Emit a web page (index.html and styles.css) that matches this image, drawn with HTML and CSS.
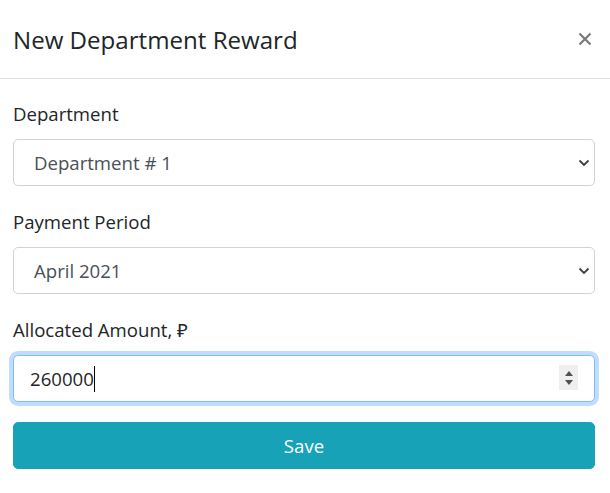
FILE: index.html
```html
<!DOCTYPE html>
<html lang="en">
<head>
<meta charset="utf-8">
<title>New Department Reward</title>
<link rel="stylesheet" href="styles.css">
</head>
<body>
<div class="modal">
  <div class="modal-header">
    <h5 class="modal-title">New Department Reward</h5>
    <button type="button" class="close" aria-label="Close"><svg width="14" height="14" viewBox="0 0 14 14"><path d="M1.5 1.5 L12.5 12.5 M12.5 1.5 L1.5 12.5" stroke="#7a7a7a" stroke-width="2.2" fill="none"/></svg></button>
  </div>
  <form class="modal-body">
    <div class="form-group">
      <label class="label">Department</label>
      <div class="select-wrap">
        <select class="form-control select">
          <option>Department # 1</option>
        </select>
        <svg class="chevron" width="12" height="8" viewBox="0 0 12 8"><path d="M1.5 1.5 L6 6 L10.5 1.5" fill="none" stroke="#3b3f44" stroke-width="1.8"/></svg>
      </div>
    </div>
    <div class="form-group">
      <label class="label">Payment Period</label>
      <div class="select-wrap">
        <select class="form-control select">
          <option>April 2021</option>
        </select>
        <svg class="chevron" width="12" height="8" viewBox="0 0 12 8"><path d="M1.5 1.5 L6 6 L10.5 1.5" fill="none" stroke="#3b3f44" stroke-width="1.8"/></svg>
      </div>
    </div>
    <div class="form-group last">
      <label class="label">Allocated Amount, ₽</label>
      <div class="form-control input focus">
        <span class="value">260000</span><span class="caret"></span>
        <span class="spinner">
          <svg width="10" height="18" viewBox="0 0 10 18"><path d="M1 7 L5 2 L9 7 Z M1 11 L5 16 L9 11 Z" fill="#505050"/></svg>
        </span>
      </div>
    </div>
    <button type="button" class="btn">Save</button>
  </form>
</div>
</body>
</html>
```
FILE: styles.css
```css
html, body {
  margin: 0;
  padding: 0;
  background: #fff;
}
body {
  font-family: "Open Sans", "Noto Sans", sans-serif;
  font-size: 18.6px;
  line-height: 30px;
  color: #212529;
}
.modal {
  width: 610px;
}
.modal-header {
  display: flex;
  align-items: center;
  justify-content: space-between;
  padding: 1px 18px 0 13px;
  border-bottom: 1px solid #dee2e6;
  box-sizing: border-box;
  height: 79px;
}
.modal-title {
  margin: 0;
  font-size: 24.1px;
  font-weight: 400;
  line-height: 37px;
}
.close {
  display: flex;
  border: 0;
  background: transparent;
  padding: 0;
  margin-top: -2px;
  line-height: 0;
}
.modal-body {
  display: block;
  padding: 20px 15px 20px 13px;
}
.form-group {
  margin-bottom: 21px;
}
.form-group.last {
  margin-bottom: 20px;
}
.label {
  display: block;
  margin-bottom: 10px;
  line-height: 30px;
}
.form-control {
  display: block;
  width: 100%;
  height: 47px;
  box-sizing: border-box;
  border: 1px solid #ced4da;
  border-radius: 5px;
  background: #fff;
  font-family: inherit;
  font-size: 18.6px;
  line-height: 30px;
  color: #495057;
}
.select-wrap {
  position: relative;
}
.select {
  appearance: none;
  -webkit-appearance: none;
  padding: 7px 15px 7px 20px;
}
.chevron {
  position: absolute;
  right: 5px;
  top: 20px;
}
.input {
  position: relative;
  display: flex;
  align-items: center;
  padding: 0 15px 0 16px;
  color: #212529;
}
.focus {
  border-color: #80bdff;
  box-shadow: 0 0 0 4px rgba(0, 123, 255, .25);
}
.caret {
  display: inline-block;
  width: 1px;
  height: 26px;
  background: #000;
}
.spinner {
  position: absolute;
  right: 16px;
  top: 9px;
  width: 19px;
  height: 25px;
  background: #efefef;
  display: flex;
  align-items: center;
  justify-content: center;
}
.btn {
  display: block;
  width: 100%;
  height: 47px;
  border: 1px solid #17a2b8;
  border-radius: 5px;
  background: #17a2b8;
  color: #fff;
  font-family: inherit;
  font-size: 18.6px;
  line-height: 30px;
  padding: 0;
}
```
